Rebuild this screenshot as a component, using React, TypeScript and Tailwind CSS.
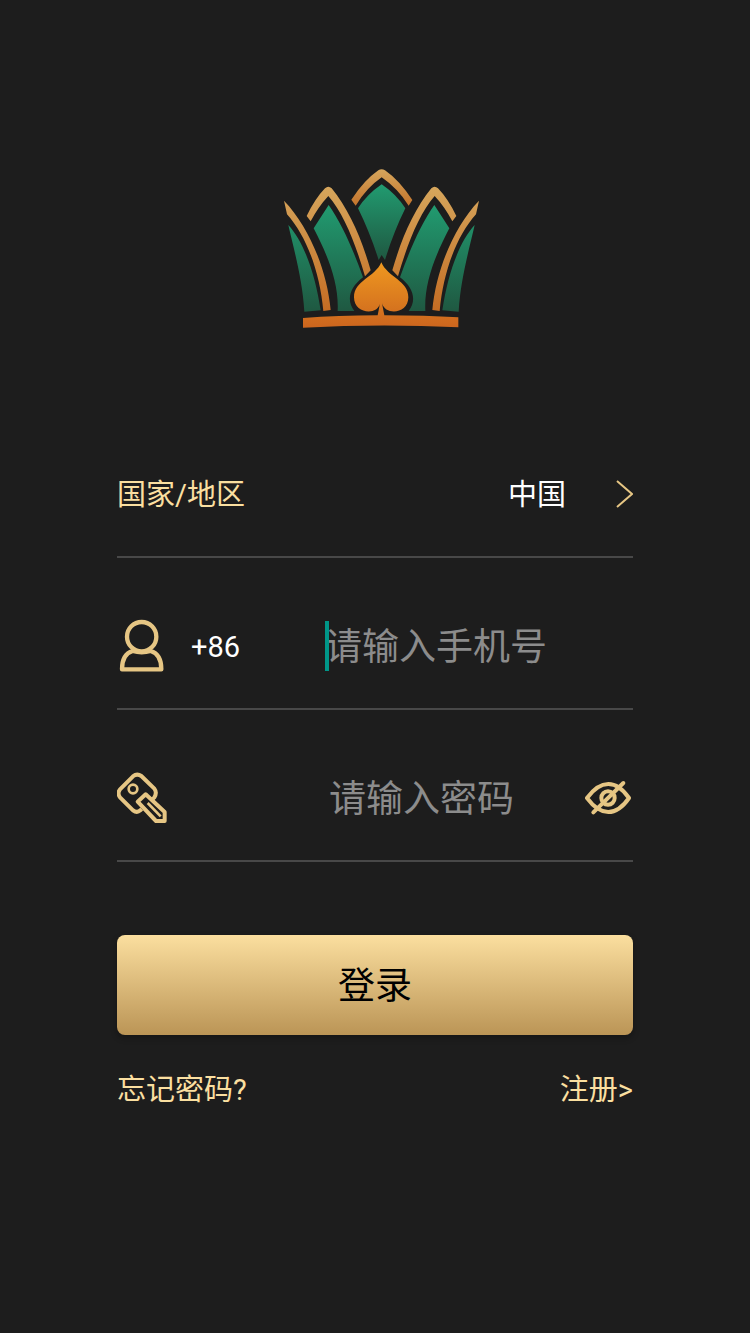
import { useState } from "react";

function CrownLogo() {
  return (
    <svg viewBox="-15 0 630 540" className="h-[180px] w-[210px]" role="img" aria-label="Crown">
      <defs>
        <linearGradient id="gold" gradientUnits="userSpaceOnUse" x1="0" y1="80" x2="0" y2="450">
          <stop offset="0" stopColor="#d6a65c" />
          <stop offset="1" stopColor="#c46d24" />
        </linearGradient>
        <linearGradient id="goldTop" gradientUnits="userSpaceOnUse" x1="0" y1="28" x2="0" y2="137">
          <stop offset="0" stopColor="#d6a65c" />
          <stop offset="1" stopColor="#c4742c" />
        </linearGradient>
        <linearGradient id="green" gradientUnits="userSpaceOnUse" x1="0" y1="135" x2="0" y2="455">
          <stop offset="0" stopColor="#219b70" />
          <stop offset="1" stopColor="#1f5841" />
        </linearGradient>
        <linearGradient id="greenTop" gradientUnits="userSpaceOnUse" x1="0" y1="73" x2="0" y2="298">
          <stop offset="0" stopColor="#219b70" />
          <stop offset="1" stopColor="#1f5841" />
        </linearGradient>
        <linearGradient id="spade" gradientUnits="userSpaceOnUse" x1="0" y1="307" x2="0" y2="500">
          <stop offset="0" stopColor="#ef9820" />
          <stop offset="1" stopColor="#cc661e" />
        </linearGradient>
        <g id="side">
          <path fill="url(#gold)" d="M95 168Q120 116 150 85Q160 76 170 85C222 150 258 230 287 331L270 349C242 252 206 160 160 108Q130 140 107 184Z" />
          <path fill="url(#green)" d="M161 135L116 205C160 290 192 370 188 453H238C214 422 222 384 264 352C235 270 200 190 161 135Z" />
          <path fill="url(#gold)" d="M27 122C102 200 156 330 167 450L145 453C135 340 97 232 36 163Z" />
          <path fill="url(#green)" d="M40 195C90 250 122 350 137 451L88 455C82 360 62 290 40 195Z" />
        </g>
      </defs>
      <path fill="url(#goldTop)" d="M229 119Q268 60 310 31Q320 25 330 31Q372 60 412 120L401 137Q368 85 320 52Q275 83 242 137Z" />
      <path fill="url(#greenTop)" d="M320 73Q276 103 249 145Q285 218 311 300L320 285L330 300Q355 218 391 145Q364 103 320 73Z" />
      <use href="#side" />
      <use href="#side" transform="translate(639 0) scale(-1 1)" />
      <path fill="url(#spade)" d="M319 307C300 352 237 362 237 412C237 462 308 468 315 430L308 466Q190 466 84 474V503Q320 490 550 502V472Q450 466 328 466L321 430C331 468 400 462 400 412C400 362 338 352 319 307Z" />
    </svg>
  );
}

function UserIcon() {
  return (
    <svg viewBox="36 26 150 165" className="h-[55px] w-[50px]" fill="none" stroke="#e6c684" strokeWidth="13" strokeLinejoin="round" aria-hidden="true">
      <circle cx="110" cy="79" r="44" />
      <path d="M83 122C62 128 51 146 51 177H169C169 146 158 128 137 122Q110 130 83 122Z" />
    </svg>
  );
}

function KeyIcon() {
  return (
    <svg viewBox="36 27 150 162" className="h-[54px] w-[50px]" fill="none" stroke="#e6c684" strokeWidth="12" strokeLinejoin="round" aria-hidden="true">
      <path d="M110 141L106 145Q96 154 84 145L45 106Q36 94 45 82L84 43Q96 33 109 42L148 80Q157 92 148 106L142 112" />
      <circle cx="84" cy="81" r="13" strokeWidth="8" />
      <path d="M98 119L122 97L179 150V177H153Z" />
      <path d="M128 123L167 163" strokeWidth="8" />
    </svg>
  );
}

function EyeOffIcon() {
  return (
    <svg viewBox="30 27 144 114" className="h-[38px] w-[48px]" fill="none" stroke="#e6c684" strokeWidth="12" strokeLinecap="round" aria-hidden="true">
      <path d="M36 84Q67 42 100 42Q133 42 162 84Q133 126 100 126Q67 126 36 84Z" strokeLinejoin="round" />
      <circle cx="99" cy="84" r="20" />
      <path d="M55 127L145 39" />
    </svg>
  );
}

const row = "flex h-[152px] items-center border-b-2 border-[#484848] pt-[26px]";
const field =
  "h-[56px] min-w-0 flex-1 bg-transparent pt-[3px] text-[37px] text-white caret-[#009688] outline-none placeholder:text-[#8c8c8c] placeholder:opacity-100";

export default function App() {
  const [phone, setPhone] = useState("");
  const [visible, setVisible] = useState(false);

  return (
    <main className="min-h-screen bg-[#1d1d1d] px-[117px] pt-[160px] pb-16 font-[Roboto,'Noto_Sans_CJK_SC',sans-serif] text-[29px] text-[#fadfa0]">
      <div className="mb-[66px] flex justify-center">
        <CrownLogo />
      </div>
      <form onSubmit={(e) => e.preventDefault()}>
        <div className={row}>
          <label htmlFor="region" className="flex-1 pt-1">国家/地区</label>
          <div className="relative flex items-center">
            <select id="region" className="h-[56px] appearance-none bg-transparent pt-1 pr-[66px] text-white outline-none">
              <option>中国</option>
            </select>
            <svg viewBox="0 0 18 30" className="pointer-events-none absolute right-0 h-[30px] w-[18px]" fill="none" stroke="#e6c684" strokeWidth="2" aria-hidden="true">
              <path d="M2 2L17 15L2 28" />
            </svg>
          </div>
        </div>
        <div className={row}>
          <label htmlFor="phone" className="flex w-[208px] items-center gap-6" aria-label="手机号">
            <UserIcon />
            <span className="pt-1 text-white">+86</span>
          </label>
          <div className="relative flex min-w-0 flex-1 items-center">
            <input id="phone" type="tel" value={phone} onChange={(e) => setPhone(e.target.value)} placeholder="请输入手机号" className={field} />
            {phone === "" && <span className="pointer-events-none absolute left-0 h-[50px] w-1 bg-[#009688]" />}
          </div>
        </div>
        <div className={row}>
          <label htmlFor="password" className="w-[212px]" aria-label="密码">
            <KeyIcon />
          </label>
          <input id="password" type={visible ? "text" : "password"} placeholder="请输入密码" className={field} />
          <button type="button" aria-label="显示密码" onClick={() => setVisible(!visible)}>
            <EyeOffIcon />
          </button>
        </div>
        <button type="submit" className="mt-[73px] h-[100px] w-full rounded-lg bg-linear-to-b from-[#fbdf9f] to-[#bb9556] pt-1 text-[37px] text-black shadow-[0_3px_6px_rgba(0,0,0,0.3)]">
          登录
        </button>
      </form>
      <nav className="mt-[33px] flex justify-between leading-[44px]">
        <a href="#forgot">忘记密码?</a>
        <a href="#register">注册&gt;</a>
      </nav>
    </main>
  );
}
